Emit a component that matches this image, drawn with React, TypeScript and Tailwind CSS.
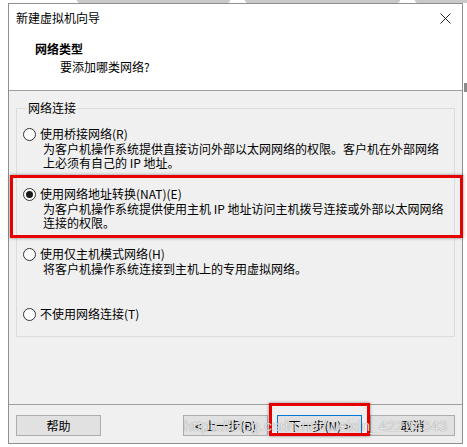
import React from "react";

const font = { fontFamily: '"Noto Sans CJK SC", "Noto Sans", sans-serif' };

interface NetOption {
  id: string;
  label: string;
  lines: string[];
  checked?: boolean;
}

const options: NetOption[] = [
  {
    id: "bridge",
    label: "使用桥接网络(R)",
    lines: [
      "为客户机操作系统提供直接访问外部以太网网络的权限。客户机在外部网络",
      "上必须有自己的 IP 地址。",
    ],
  },
  {
    id: "nat",
    label: "使用网络地址转换(NAT)(E)",
    lines: [
      "为客户机操作系统提供使用主机 IP 地址访问主机拨号连接或外部以太网网络",
      "连接的权限。",
    ],
    checked: true,
  },
  {
    id: "host",
    label: "使用仅主机模式网络(H)",
    lines: ["将客户机操作系统连接到主机上的专用虚拟网络。", "\u00a0"],
  },
  { id: "none", label: "不使用网络连接(T)", lines: [] },
];

const Radio = ({ checked }: { checked?: boolean }) => (
  <span className="w-[13px] h-[13px] rounded-full border border-[#333333] bg-white flex items-center justify-center shrink-0">
    {checked && <span className="w-[7px] h-[7px] rounded-full bg-[#1a1a1a]" />}
  </span>
);

const Button = ({ label, primary }: { label: string; primary?: boolean }) => (
  <div
    className={`w-[85px] h-[21px] flex items-center justify-center bg-[#e1e1e1] border text-[12px] leading-[16px] text-black ${
      primary ? "border-[#0078d7]" : "border-[#adadad]"
    }`}
  >
    {label}
  </div>
);

export default function App() {
  return (
    <div className="w-[467px] h-[447px] bg-white relative overflow-hidden" style={font}>
      {/* background tabs peeking above the dialog */}
      <div className="h-[3px] flex">
        <div className="w-[77px]" />
        <div className="w-[153px] bg-[#c9c9c9] rounded-b-[3px]" />
        <div className="w-[15px]" />
        <div className="w-[155px] bg-[#c9c9c9] rounded-b-[3px]" />
        <div className="w-[15px]" />
        <div className="flex-1 bg-[#c9c9c9] rounded-bl-[3px]" />
      </div>

      <div className="flex">
        <div className="w-[8px]" />
        <div className="w-[455px] h-[441px] border border-[#8f8f8f] bg-[#f0f0f0] flex flex-col">
          {/* title + header */}
          <div className="bg-white border-b border-[#a0a0a0] h-[87px] flex flex-col">
            <div className="flex items-center justify-between pt-[6px] pl-[7px] pr-[11px]">
              <span className="text-[12px] leading-[16px] text-black">新建虚拟机向导</span>
              <svg width="11" height="11" viewBox="0 0 11 11" className="text-[#222222]">
                <path d="M0.5 0.5 L10.5 10.5 M10.5 0.5 L0.5 10.5" stroke="currentColor" strokeWidth="1" />
              </svg>
            </div>
            <div className="pl-[26px] mt-[15px] text-[12px] leading-[16px] font-bold text-black">网络类型</div>
            <div className="pl-[51px] mt-[2px] text-[12px] leading-[16px] text-black">要添加哪类网络?</div>
          </div>

          {/* body */}
          <div className="flex-1 pt-[9px] px-[7px]">
            <fieldset className="border border-[#dcdcdc] pl-[6px] pb-[9px] h-[237px]">
              <legend className="ml-[4px] px-[1px] text-[12px] leading-[16px] text-black">网络连接</legend>
              <div className="flex flex-col pt-[10px] gap-[16px]">
                {options.map((opt) => (
                  <div key={opt.id} className="flex flex-col">
                    <div className="flex items-center gap-[4px] h-[16px]">
                      <Radio checked={opt.checked} />
                      <span className="text-[12px] leading-[16px] text-black">{opt.label}</span>
                    </div>
                    {opt.lines.map((line, i) => (
                      <div key={i} className="pl-[20px] text-[12px] leading-[14px] text-black whitespace-nowrap">
                        {line}
                      </div>
                    ))}
                  </div>
                ))}
              </div>
            </fieldset>
          </div>

          {/* footer */}
          <div className="border-t border-[#a0a0a0] h-[39px] pt-[10px] px-[7px] flex">
            <Button label="帮助" />
            <div className="flex-1" />
            <div className="flex gap-[9px]">
              <Button label="< 上一步(B)" />
              <Button label="下一步(N) >" primary />
            </div>
            <div className="w-[8px]" />
            <Button label="取消" />
          </div>
        </div>
        <div className="w-[4px] flex flex-col">
          <div className="mt-[80px] ml-[1px] w-[3px] h-[9px] bg-[#5a5a5a]/70" />
        </div>
      </div>

      {/* red annotation boxes */}
      <div className="absolute left-[10px] top-[175px] w-[453px] h-[63px] border-[3px] border-[#e60000] shadow-[0_0_3px_rgba(0,0,0,0.45)]" />
      <div className="absolute left-[269px] top-[403px] w-[101px] h-[33px] border-[3px] border-[#e60000] shadow-[0_0_3px_rgba(0,0,0,0.45)]" />

      {/* watermark */}
      <div
        className="absolute left-[184px] top-[417px] text-[15.5px] leading-[18px] text-white/80 [text-shadow:0_0_1px_rgba(0,0,0,0.5)] whitespace-nowrap"
        style={{ fontFamily: '"Liberation Sans", Arial, sans-serif' }}
      >
        https://blog.csdn.net/weixin_42224343
      </div>
    </div>
  );
}
